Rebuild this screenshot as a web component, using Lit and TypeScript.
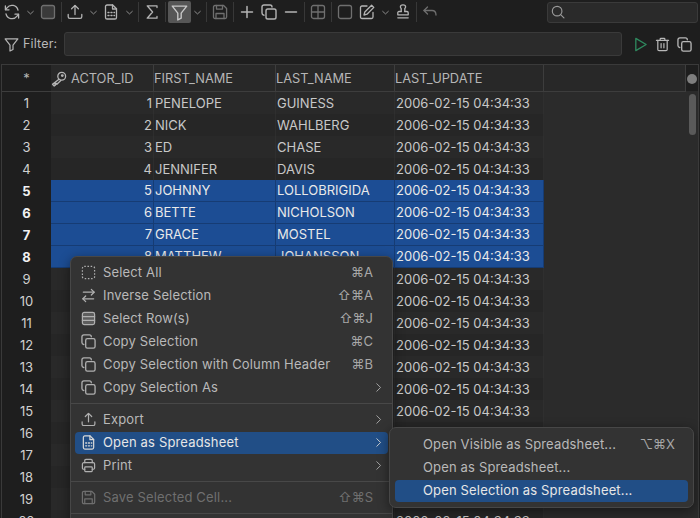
import { LitElement, html, css, svg } from "lit";
import { customElement } from "lit/decorators.js";

const ic = (body: unknown, cls = "") => html`<svg class="icon ${cls}" viewBox="0 0 16 16" fill="none" stroke="currentColor" stroke-width="1.3" stroke-linecap="round" stroke-linejoin="round">${body}</svg>`;

const I = {
  refresh: svg`<path d="M14 6.2A6.2 6.2 0 0 0 3 3.8L1.6 5.6"/><path d="M1.4 2v3.8h3.6"/><path d="M2 9.8a6.2 6.2 0 0 0 11 2.4l1.4-1.8"/><path d="M14.6 14v-3.8H11"/>`,
  square: svg`<rect x="1.5" y="1.5" width="13" height="13" rx="2"/>`,
  stop: svg`<rect x="1.5" y="1.5" width="13" height="13" rx="2" fill="currentColor" fill-opacity=".35"/>`,
  upload: svg`<path d="M8 10.5V1.6"/><path d="M4.6 4.8 8 1.4l3.4 3.4"/><path d="M1.2 10.5v2.2c0 1 .7 1.7 1.7 1.7h10.2c1 0 1.7-.7 1.7-1.7v-2.2"/>`,
  doc: svg`<path d="M3.6 1h5.6L13 4.8v8.6c0 1-.6 1.6-1.6 1.6H3.6C2.6 15 2 14.400 2 13.400V2.600C2 1.600 2.600 1 3.600 1Z" transform="translate(.5 0)"/><path d="M9.500 1v4h4"/><path d="M5 8.500h1M8 8.500h1M11 8.500h.5M5 11.500h1M8 11.500h1M11 11.500h.5" stroke-width="1.400"/>`,
  sigma: svg`<path d="M13 3.500V1.800H3.200L8.600 8l-5.400 6.200H13v-1.700"/>`,
  filter: svg`<path d="M1.200 2h13.600L9.600 8.600v4.800L6.400 15V8.600Z"/>`,
  save: svg`<path d="M3 1.500h8.600l3 3V13c0 .9-.6 1.500-1.500 1.500H3c-.9 0-1.500-.6-1.500-1.500V3c0-.9.6-1.500 1.500-1.500Z"/><path d="M4.500 1.500v3.600h6V1.500"/><path d="M4 14.500V9.500h8v5"/>`,
  plus: svg`<path d="M8 2.500v11M2.500 8h11" stroke-width="1.500"/>`,
  minus: svg`<path d="M2.500 8h11" stroke-width="1.500"/>`,
  copy: svg`<rect x="5" y="5" width="10" height="10" rx="1.800" stroke-width="1.400"/><path d="M3 11.200C1.800 11 1 10.200 1 9V3c0-1.200.8-2 2-2h6c1.200 0 2 .8 2 2" stroke-width="1.400"/>`,
  grid: svg`<rect x="1.500" y="1.500" width="13" height="13" rx="2"/><path d="M8 1.500v13M1.500 8h13"/>`,
  edit: svg`<path d="M14 8.500V13c0 1-.6 1.500-1.500 1.500H3c-.9 0-1.500-.5-1.500-1.500V3.500C1.500 2.500 2.100 2 3 2h5"/><path d="M12.600 1.200 14.800 3.400 8 10.200l-3 .8.800-3Z"/>`,
  stamp: svg`<path d="M6.200 7.500V4.500C5.700 4 5.400 3.400 5.400 2.800 5.400 1.600 6.500.8 8 .8s2.600.8 2.600 2c0 .6-.3 1.200-.8 1.700v3"/><path d="M6.200 7.500H4c-.7 0-1.200.5-1.200 1.200v2.100h10.400V8.700c0-.7-.5-1.200-1.200-1.200H9.800"/><path d="M2.800 13.800h10.400"/>`,
  undo: svg`<path d="M5.500 3 2 6.500 5.500 10"/><path d="M2 6.500h8c2.500 0 4 1.700 4 4.500"/>`,
  search: svg`<circle cx="7" cy="7" r="5.500"/><path d="m11 11 3.800 3.800"/>`,
  play: svg`<path d="M3 1.500 14 8 3 14.500Z" stroke-width="1.400"/>`,
  trash: svg`<path d="M1.500 3.500h13"/><path d="M5.500 3.500V2.200c0-.5.400-.8.800-.8h3.400c.5 0 .8.300.8.800v1.300"/><path d="M3 3.500v9.800c0 .9.500 1.300 1.300 1.300h7.400c.8 0 1.300-.4 1.300-1.300V3.500"/><path d="M6.500 7v4.500M9.500 7v4.500"/>`,
  key: svg`<circle cx="10.700" cy="5.300" r="3.900"/><circle cx="11.300" cy="4.600" r=".8"/><path d="M8 8.200 1.500 13.200l1.700 1.800 1.400-1-.8-1 1.200-.8.900 1 3.900-3.600"/>`,
  selectAll: svg`<rect x="1.500" y="1.500" width="13" height="13" rx="2" stroke-dasharray="1.600 1.800" stroke-linecap="butt"/>`,
  inverse: svg`<path d="M14 4.500H2.500"/><path d="m11 1.500 3 3-3 3"/><path d="M2 11.500h11.500"/><path d="m5 8.500-3 3 3 3"/>`,
  rows: svg`<rect x="1.500" y="1.500" width="13" height="13" rx="2" fill="currentColor" fill-opacity=".35"/><path d="M1.500 6h13M1.500 10h13"/>`,
  print: svg`<path d="M4 5V2.800c0-.8.500-1.300 1.300-1.300h5.400c.8 0 1.300.5 1.300 1.300V5"/><path d="M4 12H2.800c-.8 0-1.300-.5-1.300-1.300V6.500C1.500 5.600 2.100 5 3 5h10c.9 0 1.500.6 1.500 1.500v4.200c0 .8-.5 1.300-1.300 1.300H12"/><rect x="4" y="9.500" width="8" height="5" rx=".8"/>`,
  chev: svg`<path d="m3 6 5 4.500L13 6"/>`,
  right: svg`<path d="m5.500 2.500 5.500 5.500-5.500 5.500"/>`,
};

const people = [
  ["PENELOPE", "GUINESS"], ["NICK", "WAHLBERG"], ["ED", "CHASE"], ["JENNIFER", "DAVIS"],
  ["JOHNNY", "LOLLOBRIGIDA"], ["BETTE", "NICHOLSON"], ["GRACE", "MOSTEL"], ["MATTHEW", "JOHANSSON"],
  ["JOE", "SWANK"], ["CHRISTIAN", "GABLE"], ["ZERO", "CAGE"], ["KARL", "BERRY"], ["UMA", "WOOD"],
  ["VIVIEN", "BERGEN"], ["CUBA", "OLIVIER"], ["JULIA", "MCQUEEN"], ["WOODY", "HOFFMAN"],
  ["DAN", "TORN"], ["BOB", "FAWCETT"], ["REESE", "KILMER"],
];

type Item = { label?: string; icon?: unknown; key?: string; sub?: boolean; cls?: string; sep?: boolean };
const menu: Item[] = [
  { label: "Select All", icon: I.selectAll, key: "⌘A" },
  { label: "Inverse Selection", icon: I.inverse, key: "⇧⌘A" },
  { label: "Select Row(s)", icon: I.rows, key: "⇧⌘J" },
  { label: "Copy Selection", icon: I.copy, key: "⌘C" },
  { label: "Copy Selection with Column Header", icon: I.copy, key: "⌘B" },
  { label: "Copy Selection As", icon: I.copy, sub: true },
  { sep: true },
  { label: "Export", icon: I.upload, sub: true },
  { label: "Open as Spreadsheet", icon: I.doc, sub: true, cls: "hot" },
  { label: "Print", icon: I.print, sub: true },
  { sep: true },
  { label: "Save Selected Cell...", icon: I.save, key: "⇧⌘S", cls: "off" },
  { sep: true },
];
const submenu: Item[] = [
  { label: "Open Visible as Spreadsheet...", key: "⌥⌘X" },
  { label: "Open as Spreadsheet..." },
  { label: "Open Selection as Spreadsheet...", cls: "hot" },
];

@customElement("app-root")
export class AppRoot extends LitElement {
  static styles = css`
    :host { display: block; width: 700px; height: 518px; position: relative; overflow: hidden; background: #1e1e1e; color: #c4c4c4; font: 13px/1 Inter, "Liberation Sans", sans-serif; letter-spacing: .16px; }
    .icon { width: 16px; height: 16px; display: block; flex: none; }
    .toolbar { display: flex; align-items: center; height: 24px; padding-left: 1px; color: #b4b4b4; }
    .btn { width: 22px; height: 22px; display: flex; align-items: center; justify-content: center; flex: none; }
    .btn.dim { color: #6f6f6f; }
    .btn.on { width: 23px; background: #565656; border-radius: 2px; color: #c8c8c8; }
    .btn.on .icon { width: 17px; height: 17px; }
    .chev { width: 14px; height: 22px; display: flex; align-items: center; justify-content: center; flex: none; }
    .chev.narrow { width: 13px; }
    .chev .icon { width: 9px; height: 9px; }
    .tsep { width: 1px; height: 20px; margin: 0 2px; background: #383838; flex: none; }
    .search { margin-left: auto; margin-right: 2px; width: 146px; height: 19px; border: 1px solid #3a3a3a; border-radius: 3px; background: #2a2a2a; display: flex; align-items: center; padding-left: 3px; color: #9a9a9a; }
    .search .icon { width: 14px; height: 14px; }
    .filter { display: flex; align-items: center; height: 26px; margin-top: 7px; padding: 0 5px 0 4px; }
    .filter > .icon { width: 15px; height: 15px; color: #b4b4b4; }
    .filter label { margin-left: 4px; color: #b8b8b8; font-size: 12.500px; }
    .finput { margin-left: 7px; width: 556px; height: 22px; background: #2b2b2b; border: 1px solid #3a3a3a; border-radius: 3px; }
    .factions { display: flex; align-items: center; gap: 7px; margin-left: 11px; color: #b8b8b8; }
    .factions .play { color: #2f8a5f; width: 14px; height: 14px; }
    .factions .icon { width: 15px; height: 15px; }
    .grid { margin: 7px 1px 0 1px; border-top: 1px solid #3a3a3a; border-left: 1px solid #3a3a3a; border-right: 1px solid #3a3a3a; height: 460px; display: flex; overflow: hidden; letter-spacing: 0; }
    .table { width: 684px; flex: none; }
    .hrow, .row { display: grid; grid-template-columns: 49px 103px 122px 119px 149px 142px; }
    .hrow { height: 26px; border-bottom: 1px solid #3d3d3d; }
    .hcell { background: #282828; border-right: 1px solid #3d3d3d; display: flex; align-items: center; padding-left: 0; color: #b6b6b6; padding-top: 3px; font-size: 12.800px; }
    .hcell.corner { background: #1e1e1e; border-right: 0; justify-content: center; padding: 0; font-size: 13px; }
    .hcell .icon { width: 16px; height: 16px; margin: -2px 4px 0 0; }
    .row { height: 22px; }
    .rn { background: #1e1e1e; display: flex; align-items: center; justify-content: center; color: #d0d0d0; }
    .c { display: flex; align-items: center; padding-left: 1px; background: #292929; border-right: 1px solid #2f2f2f; color: #c8c8c8; white-space: nowrap; overflow: hidden; }
    .row.alt .c { background: #262626; border-right-color: #2d2d2d; }
    .c.num { justify-content: flex-end; padding: 0 1px 0 0; }
    .c.blank { background: #2b2b2b !important; border-right: 0; }
    .row.sel .c:not(.blank) { background: #1c4d94; border-right-color: #163c74; border-bottom: 1px solid #163c74; color: #e9e9e9; }
    .row.sel .rn { color: #f2f2f2; font-weight: 700; }
    .rail { flex: 1; background: #2b2b2b; display: flex; flex-direction: column; align-items: center; }
    .railtop { height: 26px; width: 100%; background: #1e1e1e; display: flex; align-items: center; justify-content: center; }
    .dot { width: 10px; height: 10px; border-radius: 50%; background: #7e7e7e; margin-top: 1px; }
    .thumb { width: 7px; height: 41px; margin-top: 3px; border-radius: 4px; background: #5a5a5a; }
    .menu { position: absolute; background: #333333; border: 1px solid #474747; border-radius: 7px; box-shadow: 0 3px 12px rgba(0,0,0,.45); padding: 4px; color: #b9b9b9; display: flex; flex-direction: column; }
    .main { left: 70px; top: 256px; width: 313px; height: 290px; }
    .sub { left: 389px; top: 427px; width: 293px; padding: 5px; }
    .mi { height: 23px; display: flex; align-items: center; padding-left: 6px; padding-right: 4px; border-radius: 4px; flex: none; white-space: nowrap; }
    .mi .icon { width: 15px; height: 15px; margin-right: 7px; color: #b0b0b0; }
    .mi .key { margin-left: auto; font-family: Inter, "DejaVu Sans", sans-serif; font-size: 13px; letter-spacing: 0; color: #a8a8a8; padding-right: 11px; }
    .mi .arrow { margin-left: auto; width: 11px; height: 11px; margin-right: 0; }
    .mi.hot { background: #214e86; color: #e6e6e6; height: 22px; margin: .5px 0; }
    .mi.hot .icon { color: #d8d8d8; }
    .mi.off { color: #6f6f6f; }
    .mi.off .icon, .mi.off .key { color: #6f6f6f; }
    .msep { height: 1px; background: #484848; margin: 4px -4px 4px; flex: none; }
    .sub .mi { padding-left: 28px; padding-right: 13px; }
    .sub .mi .key { padding-right: 0; }
  `;

  private item(m: Item) {
    if (m.sep) return html`<div class="msep"></div>`;
    return html`<div class="mi ${m.cls ?? ""}">
      ${m.icon ? ic(m.icon) : ""}<span>${m.label}</span>
      ${m.key ? html`<span class="key">${m.key}</span>` : ""}
      ${m.sub ? ic(I.right, "arrow") : ""}
    </div>`;
  }

  render() {
    const b = (i: unknown, c = "") => html`<div class="btn ${c}">${ic(i)}</div>`;
    const ch = (c = "") => html`<div class="chev ${c}">${ic(I.chev)}</div>`;
    const s = html`<div class="tsep"></div>`;
    return html`
      <div class="toolbar">
        ${b(I.refresh)}${ch()}${b(I.stop, "dim")}${s}
        ${b(I.upload)}${ch()}${b(I.doc)}${ch()}${s}
        ${b(I.sigma)}${s}${b(I.filter, "on")}${ch("narrow")}${s}
        ${b(I.save, "dim")}${s}${b(I.plus)}${b(I.copy)}${b(I.minus)}${s}
        ${b(I.grid, "dim")}${s}${b(I.square, "dim")}${b(I.edit)}${ch()}${b(I.stamp)}${s}
        ${b(I.undo, "dim")}
        <div class="search">${ic(I.search)}</div>
      </div>
      <div class="filter">
        ${ic(I.filter)}<label>Filter:</label><div class="finput"></div>
        <div class="factions">${ic(I.play, "play")}${ic(I.trash)}${ic(I.copy)}</div>
      </div>
      <div class="grid">
        <div class="table">
          <div class="hrow">
            <div class="hcell corner">*</div>
            <div class="hcell">${ic(I.key)}ACTOR_ID</div>
            <div class="hcell">FIRST_NAME</div>
            <div class="hcell">LAST_NAME</div>
            <div class="hcell">LAST_UPDATE</div>
            <div class="hcell"></div>
          </div>
          ${people.map((p, i) => html`
            <div class="row ${i % 2 ? "alt" : ""} ${i >= 4 && i <= 7 ? "sel" : ""}">
              <div class="rn">${i + 1}</div>
              <div class="c num">${i + 1}</div>
              <div class="c">${p[0]}</div>
              <div class="c">${p[1]}</div>
              <div class="c">2006-02-15 04:34:33</div>
              <div class="c blank"></div>
            </div>`)}
        </div>
        <div class="rail">
          <div class="railtop"><div class="dot"></div></div>
          <div class="thumb"></div>
        </div>
      </div>
      <div class="menu main">${menu.map((m) => this.item(m))}</div>
      <div class="menu sub">${submenu.map((m) => this.item(m))}</div>
    `;
  }
}
